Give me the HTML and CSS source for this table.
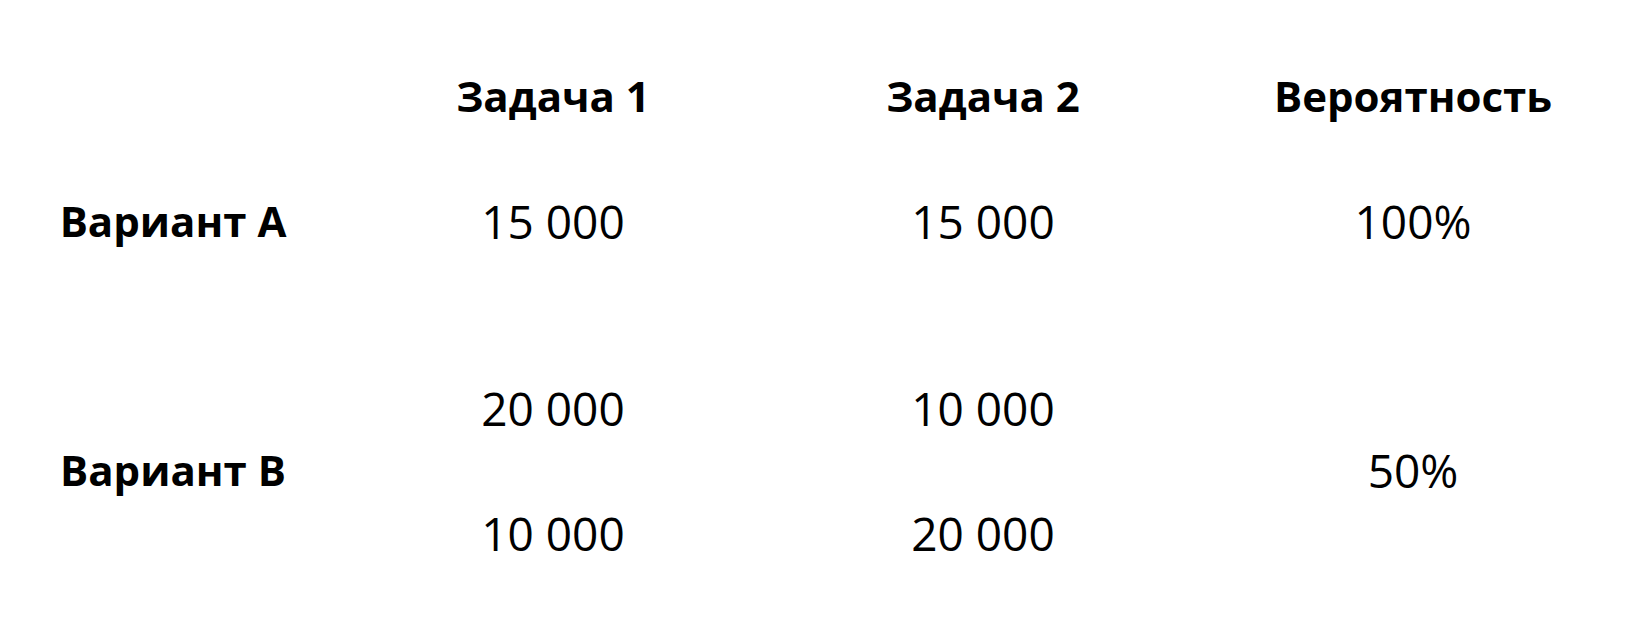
FILE: index.html
```html
<!DOCTYPE html>
<html lang="ru">
<head>
<meta charset="utf-8">
<title>Варианты</title>
<link rel="stylesheet" href="styles.css">
</head>
<body>
<div class="table">
  <div class="cell head r1 c2">Задача 1</div>
  <div class="cell head r1 c3">Задача 2</div>
  <div class="cell head r1 c4">Вероятность</div>

  <div class="cell head r3 c1">Вариант А</div>
  <div class="cell r3 c2">15 000</div>
  <div class="cell r3 c3">15 000</div>
  <div class="cell r3 c4">100%</div>

  <div class="cell r6 c2">20 000</div>
  <div class="cell r6 c3">10 000</div>
  <div class="cell head r7 c1">Вариант В</div>
  <div class="cell r7 c4">50%</div>
  <div class="cell r8 c2">10 000</div>
  <div class="cell r8 c3">20 000</div>
</div>
</body>
</html>
```

FILE: styles.css
```css
html, body {
  margin: 0;
  padding: 0;
  background: #ffffff;
}
body {
  padding: 65px 0 0 8px;
  font-family: "Open Sans", "Noto Sans", sans-serif;
  color: #000000;
}
.table {
  display: grid;
  grid-template-columns: 330px 430px 430px 430px;
  grid-template-rows: repeat(8, 62.4px);
}
.cell {
  font-size: 46px;
  line-height: 62.4px;
  text-align: center;
  white-space: nowrap;
}
.head {
  font-weight: 700;
  font-size: 42px;
}
.r1 { grid-row: 1; }
.r3 { grid-row: 3; }
.r6 { grid-row: 6; }
.r7 { grid-row: 7; }
.r8 { grid-row: 8; }
.c1 { grid-column: 1; }
.c2 { grid-column: 2; }
.c3 { grid-column: 3; }
.c4 { grid-column: 4; }
```
